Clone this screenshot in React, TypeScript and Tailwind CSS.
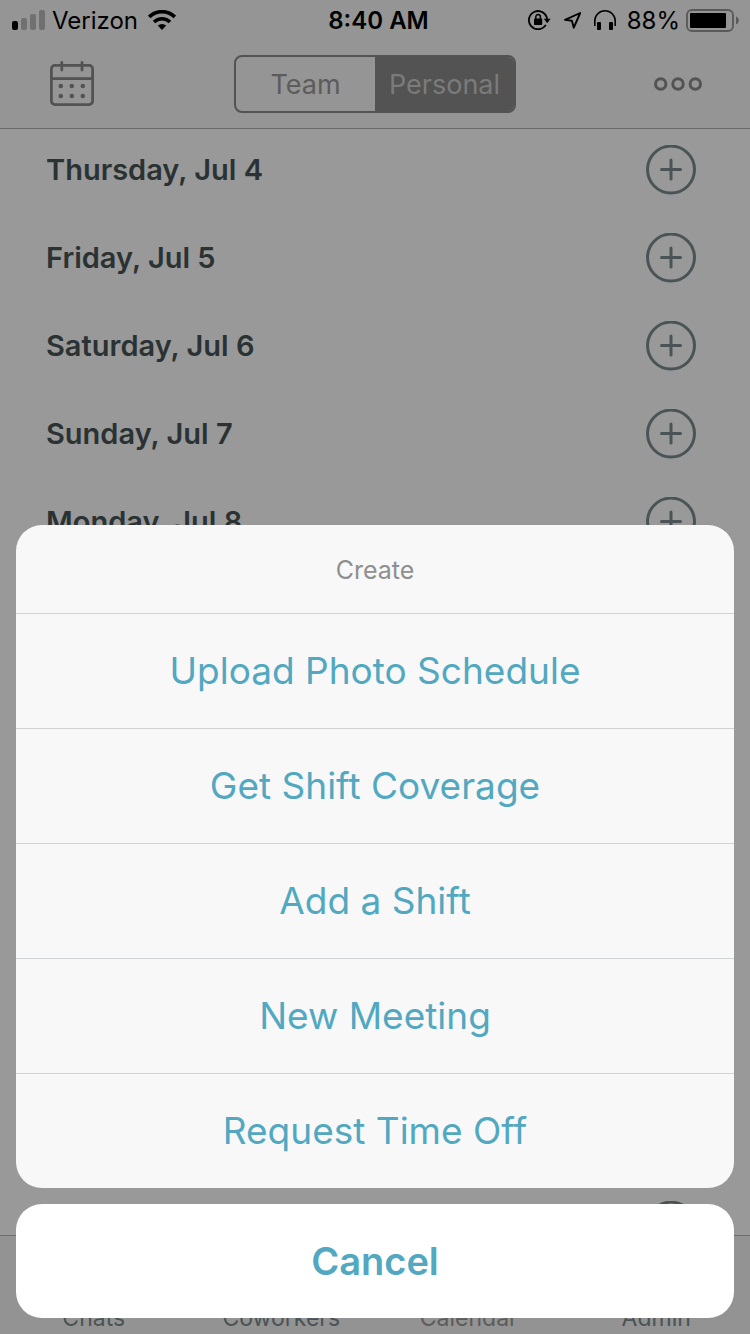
import { useState } from "react";

const days = [
  "Thursday, Jul 4",
  "Friday, Jul 5",
  "Saturday, Jul 6",
  "Sunday, Jul 7",
  "Monday, Jul 8",
];

const actions = [
  "Upload Photo Schedule",
  "Get Shift Coverage",
  "Add a Shift",
  "New Meeting",
  "Request Time Off",
];

const tabs = ["Chats", "Coworkers", "Calendar", "Admin"];

function SignalIcon() {
  return (
    <svg width="33" height="20" viewBox="0 0 33 20" aria-hidden="true">
      <rect x="0" y="11" width="6" height="9" rx="2" fill="#000" />
      <rect x="9" y="8" width="6" height="12" rx="2" fill="#707070" />
      <rect x="18" y="4" width="6" height="16" rx="2" fill="#707070" />
      <rect x="27" y="0" width="6" height="20" rx="2" fill="#707070" />
    </svg>
  );
}

function WifiIcon() {
  return (
    <svg width="28" height="20" viewBox="0 0 28 20" aria-hidden="true">
      <g fill="none" stroke="#000" strokeWidth="3.6">
        <path d="M1.2 6.9a18.2 18.2 0 0 1 25.6 0" />
        <path d="M6 12a11.4 11.4 0 0 1 16 0" />
      </g>
      <path d="M14 20l-4.2-4.4a6.2 6.2 0 0 1 8.400 0z" fill="#000" />
    </svg>
  );
}

function RotationLockIcon() {
  return (
    <svg width="23" height="20" viewBox="0 0 23 20" aria-hidden="true">
      <path d="M17.800 14.900A9.100 9.100 0 1 1 19.100 9.400" fill="none" stroke="#000" strokeWidth="1.800" />
      <path d="M15.800 8.800h6.800l-3.400 4.400z" fill="#000" />
      <rect x="6" y="8.400" width="8.200" height="6.600" rx="0.800" fill="#000" />
      <path d="M7.800 9V6.800a2.300 2.300 0 0 1 4.600 0V9" fill="none" stroke="#000" strokeWidth="1.500" />
    </svg>
  );
}

function LocationIcon() {
  return (
    <svg width="19" height="20" viewBox="0 0 19 20" aria-hidden="true">
      <path d="M17.200 3L2 9.900l6.900.8 1.900 7z" fill="none" stroke="#000" strokeWidth="1.900" strokeLinejoin="round" />
    </svg>
  );
}

function HeadphonesIcon() {
  return (
    <svg width="22" height="20" viewBox="0 0 22 20" aria-hidden="true">
      <path d="M.8 16v-5.200a10.200 10 0 0 1 20.400 0V16" fill="none" stroke="#000" strokeWidth="1.600" />
      <rect x="3" y="12" width="4" height="8" rx="1" fill="#000" />
      <rect x="15" y="12" width="4" height="8" rx="1" fill="#000" />
    </svg>
  );
}

function BatteryIcon() {
  return (
    <svg width="53" height="23" viewBox="0 0 53 23" aria-hidden="true">
      <rect x="1" y="1" width="46" height="21" rx="5" fill="none" stroke="#5a5a5a" strokeWidth="1.900" />
      <rect x="4" y="4" width="36" height="15" rx="1" fill="#000" />
      <path d="M50 7.500c1.600.6 2.800 2.200 2.800 4s-1.200 3.400-2.800 4z" fill="#5a5a5a" />
    </svg>
  );
}

function CalendarIcon() {
  return (
    <svg width="44" height="46" viewBox="0 0 44 46" aria-hidden="true">
      <g fill="none" stroke="#535353" strokeWidth="2.800" strokeLinecap="round">
        <rect x="1.400" y="4.400" width="41.200" height="39.200" rx="3.500" />
        <path d="M1.400 17.600h41.200M11.800 1.400v7.600M32 1.400v7.600" />
      </g>
      <g fill="#535353">
        <circle cx="10.800" cy="25" r="2.300" />
        <circle cx="21.800" cy="25" r="2.300" />
        <circle cx="32.800" cy="25" r="2.300" />
        <circle cx="10.800" cy="35" r="2.300" />
        <circle cx="21.800" cy="35" r="2.300" />
        <circle cx="32.800" cy="35" r="2.300" />
      </g>
    </svg>
  );
}

function MoreIcon() {
  return (
    <svg width="48" height="14" viewBox="0 0 48 14" aria-hidden="true">
      <g fill="none" stroke="#535353" strokeWidth="3">
        <circle cx="6.700" cy="7" r="5.200" />
        <circle cx="24" cy="7" r="5.200" />
        <circle cx="41.300" cy="7" r="5.200" />
      </g>
    </svg>
  );
}

function PlusIcon() {
  return (
    <svg width="50" height="50" viewBox="0 0 50 50" aria-hidden="true">
      <g fill="none" stroke="#4a5456" strokeWidth="3" strokeLinecap="round">
        <circle cx="25" cy="24.600" r="23.500" />
        <path d="M15.500 24.600h19M25 15.100v19" />
      </g>
    </svg>
  );
}

function StatusBar() {
  return (
    <div className="grid h-10 grid-cols-[1fr_auto_1fr] items-center pl-3 pr-[11px] text-[24px] leading-[38px] text-black">
      <div className="flex items-center">
        <SignalIcon />
        <span className="ml-[7px] mr-[10px] pt-0.5">Verizon</span>
        <WifiIcon />
      </div>
      <time className="pl-1.5 pt-0.5 font-semibold">8:40 AM</time>
      <div className="flex items-center justify-end">
        <RotationLockIcon />
        <span className="mx-3">
          <LocationIcon />
        </span>
        <HeadphonesIcon />
        <span className="ml-[11px] mr-1.5 pt-0.5">88%</span>
        <BatteryIcon />
      </div>
    </div>
  );
}

export default function App() {
  const [view, setView] = useState("Personal");
  const [open, setOpen] = useState(true);

  return (
    <div className="relative flex h-screen flex-col overflow-hidden bg-[#999999] font-[Inter,'Liberation_Sans',sans-serif]">
      <header className="shrink-0 border-b border-[#6b6b6b] bg-[#959595]">
        <StatusBar />
        <nav className="grid h-[88px] grid-cols-[1fr_auto_1fr] items-center px-12">
          <button type="button" aria-label="Choose date" className="ml-0.5 justify-self-start">
            <CalendarIcon />
          </button>
          <div className="flex h-[58px] w-[282px] overflow-hidden rounded-lg border-2 border-[#535353] text-[27px]">
            {["Team", "Personal"].map((name) => (
              <button
                key={name}
                type="button"
                aria-pressed={view === name}
                onClick={() => setView(name)}
                className={
                  view === name
                    ? "flex-1 bg-[#535353] pt-0.5 text-[#7b7b7b]"
                    : "flex-1 pt-0.5 text-[#5c5c5c]"
                }
              >
                {name}
              </button>
            ))}
          </div>
          <button type="button" aria-label="More options" className="justify-self-end">
            <MoreIcon />
          </button>
        </nav>
      </header>

      <main className="flex min-h-0 flex-1 flex-col justify-between overflow-hidden pl-[46px] pr-[54px] pt-4">
        <ul className="flex flex-col gap-[38px]">
          {days.map((day) => (
            <li key={day} className="flex h-[50px] items-center justify-between">
              <h2 className="text-[29px] font-semibold text-[#2b3233]">{day}</h2>
              <button type="button" aria-label={"Add to " + day} onClick={() => setOpen(true)}>
                <PlusIcon />
              </button>
            </li>
          ))}
        </ul>
        <div className="flex h-[34px] items-start justify-end">
          <button type="button" aria-label="Add" onClick={() => setOpen(true)}>
            <PlusIcon />
          </button>
        </div>
      </main>

      <footer className="grid h-[99px] shrink-0 grid-cols-4 items-end border-t border-[#6b6b6b] bg-[#939393]">
        {tabs.map((tab) => (
          <a
            key={tab}
            href={"#" + tab.toLowerCase()}
            className={
              tab === "Calendar"
                ? "text-center text-[23px] leading-[32px] text-[#5c5c5c]"
                : "text-center text-[23px] leading-[32px] text-[#4a5456]"
            }
          >
            {tab}
          </a>
        ))}
      </footer>

      {open && (
        <div role="dialog" aria-label="Create" className="absolute inset-0 flex flex-col justify-end gap-4 p-4 text-[#51a8c0]">
          <div className="flex flex-col overflow-hidden rounded-[26px] bg-[#f8f8f8]">
            <h1 className="flex h-[88px] items-center justify-center pt-1 text-[25px] text-[#8f8f8f]">Create</h1>
            {actions.map((action) => (
              <button key={action} type="button" className="h-[115px] border-t border-[#d0d3d3] text-[37px]">
                {action}
              </button>
            ))}
          </div>
          <button
            type="button"
            onClick={() => setOpen(false)}
            className="h-[114px] shrink-0 rounded-[26px] bg-white text-[38px] font-semibold"
          >
            Cancel
          </button>
        </div>
      )}
    </div>
  );
}
